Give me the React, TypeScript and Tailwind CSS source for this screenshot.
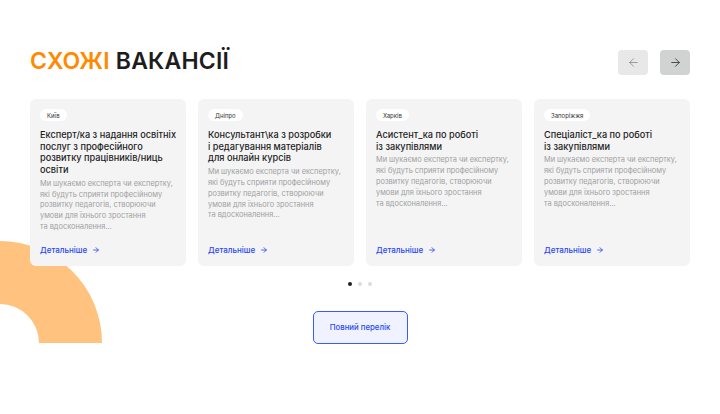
import { ArrowLeft, ArrowRight } from "lucide-react";

interface IVacancy {
  city: string;
  title: string[];
}

const vacancies: IVacancy[] = [
  {
    city: "Київ",
    title: ["Експерт/ка з надання освітніх", "послуг з професійного", "розвитку працівників/ниць", "освіти"],
  },
  {
    city: "Дніпро",
    title: ["Консультант\\ка з розробки", "і редагування матеріалів", "для онлайн курсів"],
  },
  { city: "Харків", title: ["Асистент_ка по роботі", "із закупівлями"] },
  { city: "Запоріжжя", title: ["Спеціаліст_ка по роботі", "із закупівлями"] },
];

const descLines = [
  "Ми шукаємо експерта чи експертку,",
  "які будуть сприяти професійному",
  "розвитку педагогів, створюючи",
  "умови для їхнього зростання",
  "та вдосконалення…",
];

const VacancyCard = ({ vacancy }: { vacancy: IVacancy }) => (
  <div className="flex flex-col h-[167px] rounded-[6px] bg-[#f4f4f5] px-[10px] pt-[10px] pb-[11px]">
    <span className="self-start flex items-center h-[12px] px-[7px] rounded-full bg-white text-[6px] text-[#333]">
      {vacancy.city}
    </span>
    <h3 className="mt-[8px] text-[9.2px] leading-[11.7px] font-medium text-[#1c1c1c]">
      {vacancy.title.map((line) => (
        <span key={line} className="block whitespace-nowrap">
          {line}
        </span>
      ))}
    </h3>
    <p className="mt-[3px] text-[7.4px] leading-[10.8px] text-[#a0a0a0]">
      {descLines.map((line) => (
        <span key={line} className="block whitespace-nowrap">
          {line}
        </span>
      ))}
    </p>
    <a className="mt-auto flex items-center gap-[5px] text-[8px] leading-[10px] font-medium text-[#2948f2]">
      Детальніше
      <ArrowRight size={8} strokeWidth={2.5} />
    </a>
  </div>
);

export default function App() {
  return (
    <div
      className="relative w-[720px] h-[414px] bg-white overflow-hidden"
      style={{ fontFamily: "Inter, 'Noto Sans', sans-serif" }}
    >
      <svg className="absolute left-0 top-[240px]" width="103" height="103" viewBox="0 0 103 103">
        <path d="M0 1 A102 102 0 0 1 102 103 L39 103 A39 39 0 0 0 0 64 Z" fill="#ffc27f" />
      </svg>
      <div className="relative flex flex-col">
        <div className="flex items-center justify-between pl-[30px] pr-[30px] pt-[47px]">
          <h2 className="text-[23px] leading-[26px] font-semibold tracking-[0.2px] text-[#1d1d1d]">
            <span className="text-[#ff8a00]">СХОЖІ</span> ВАКАНСІЇ
          </h2>
          <div className="flex gap-[12px] pt-[3px]">
            <button className="flex items-center justify-center w-[30px] h-[25px] rounded-[4px] bg-[#e8e8e8] text-[#8a8a8a]">
              <ArrowLeft size={13} strokeWidth={1.5} />
            </button>
            <button className="flex items-center justify-center w-[30px] h-[25px] rounded-[4px] bg-[#d1d3d3] text-[#2d2d2d]">
              <ArrowRight size={13} strokeWidth={1.5} />
            </button>
          </div>
        </div>
        <div className="grid grid-cols-4 gap-[12px] px-[30px] mt-[24px]">
          {vacancies.map((v) => (
            <VacancyCard key={v.city} vacancy={v} />
          ))}
        </div>
        <div className="flex justify-center gap-[6px] mt-[16px]">
          <span className="w-[4px] h-[4px] rounded-full bg-[#222]" />
          <span className="w-[4px] h-[4px] rounded-full bg-[#dcdcdc]" />
          <span className="w-[4px] h-[4px] rounded-full bg-[#dcdcdc]" />
        </div>
        <div className="flex justify-center mt-[25px]">
          <button className="w-[95px] h-[33px] rounded-[5px] border border-[#3d5cf5] bg-[#f0f3ff] text-[7.8px] font-medium text-[#2948f2]">
            Повний перелік
          </button>
        </div>
      </div>
    </div>
  );
}
